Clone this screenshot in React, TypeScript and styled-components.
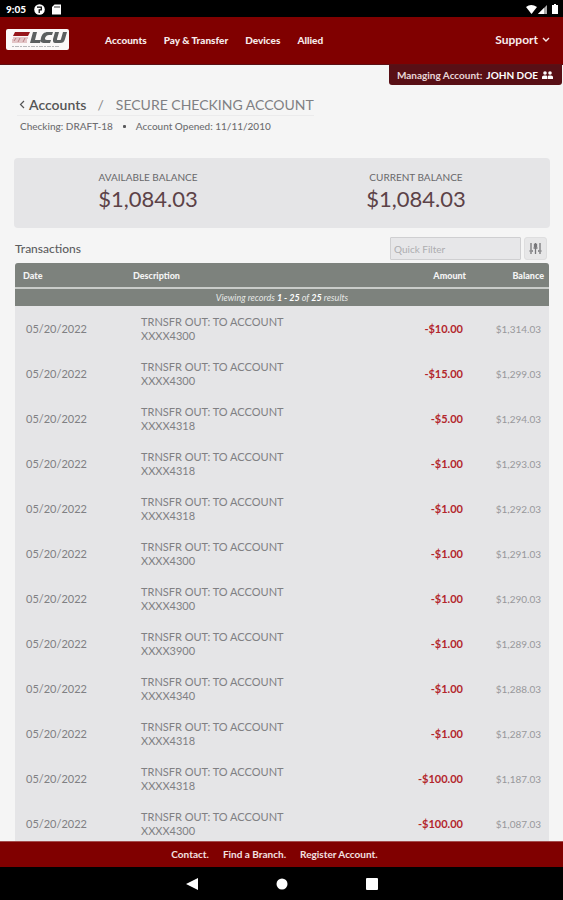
import React from "react";
import styled, { createGlobalStyle } from "styled-components";

const GlobalStyle = createGlobalStyle`
  * { box-sizing: border-box; }
  body { margin: 0; background: #f5f5f5; font-family: Lato, "Liberation Sans", sans-serif; }
  a { color: inherit; text-decoration: none; }
  button { font: inherit; cursor: pointer; }
`;

const Shell = styled.div`
  display: flex;
  flex-direction: column;
  height: 100vh;
  overflow: hidden;
`;

const StatusBar = styled.div`
  flex: none;
  display: flex;
  align-items: center;
  gap: 8px;
  height: 17px;
  padding: 1px 4px 0 6px;
  background: #000;
  color: #fff;
  font-size: 10px;
  font-weight: 900;
`;

const StatusSignals = styled.div`
  display: flex;
  align-items: center;
  gap: 2px;
  margin-left: auto;
`;

const Header = styled.header`
  flex: none;
  display: flex;
  align-items: center;
  height: 48px;
  padding: 0 13px 2px 6px;
  background: #800000;
  border-bottom: 1px solid #5c1014;
  color: #f7eaea;
`;

const LogoLink = styled.a`
  display: block;
  height: 21px;
`;

const MainNav = styled.nav`
  display: flex;
  gap: 17px;
  margin-left: 36px;
  font-size: 10px;
  font-weight: 900;
`;

const SupportButton = styled.button`
  display: flex;
  align-items: center;
  gap: 4px;
  margin-left: auto;
  padding: 0;
  border: 0;
  background: none;
  color: inherit;
  font-size: 12px;
  font-weight: 700;
`;

const Content = styled.main`
  flex: 1;
  min-height: 0;
  overflow: auto;
  scrollbar-width: none;
  color: #5d5d5f;
`;

const ManagingTab = styled.button`
  display: flex;
  align-items: center;
  gap: 4px;
  height: 20px;
  margin: 0 1px 0 auto;
  padding: 0 9px 0 8px;
  border: 0;
  border-radius: 0 0 3px 3px;
  background: #580f15;
  color: #e8d6d8;
  font-size: 10px;
  font-weight: 700;
  strong { color: #fff; font-weight: 700; }
`;

const TitleBlock = styled.div`
  padding: 10px 17px 0;
`;

const Breadcrumb = styled.div`
  display: flex;
  align-items: center;
  width: fit-content;
  height: 21px;
  padding: 0 0 1px 2px;
  border-bottom: 1px solid #ebebec;
  font-size: 14px;
  a { display: flex; align-items: center; gap: 4px; font-weight: 600; color: #555; }
`;

const Slash = styled.span`
  margin: 0 12px 0 11px;
  color: #888;
`;

const PageTitle = styled.h1`
  margin: 0;
  font-size: 14px;
  font-weight: 400;
  color: #808083;
`;

const AccountMeta = styled.div`
  display: flex;
  align-items: center;
  gap: 10px;
  height: 20px;
  padding-left: 3px;
  font-size: 10px;
  font-weight: 500;
  color: #6d6d70;
`;

const Dot = styled.span`
  width: 3px;
  height: 3px;
  border-radius: 1px;
  background: #5a5a5c;
`;

const Balances = styled.section`
  display: grid;
  grid-template-columns: 1fr 1fr;
  height: 70px;
  margin: 22px 13px 0 14px;
  padding-top: 12px;
  border-radius: 4px;
  background: #e5e5e7;
  text-align: center;
`;

const BalanceLabel = styled.div`
  font-size: 10px;
  line-height: 14px;
  color: #68686a;
`;

const BalanceValue = styled.div`
  font-size: 22px;
  line-height: 30px;
  color: #5c4247;
`;

const Toolbar = styled.div`
  display: flex;
  align-items: center;
  gap: 3px;
  margin: 9px 16px 3px 15px;
`;

const SectionTitle = styled.h2`
  flex: 1;
  margin: 0;
  font-size: 12px;
  font-weight: 500;
`;

const FilterInput = styled.input`
  width: 131px;
  height: 23px;
  padding: 0 3px;
  border: 1px solid #cfcfd1;
  border-radius: 1px;
  background: #e7e7e9;
  font: 10px Lato, sans-serif;
  &::placeholder { color: #adadb0; opacity: 1; }
`;

const FilterButton = styled.button`
  display: grid;
  place-items: center;
  width: 23px;
  height: 23px;
  padding: 0;
  border: 1px solid #dededf;
  border-radius: 3px;
  background: #e7e7e8;
`;

const TableFrame = styled.div`
  margin: 0 14px 0 15px;
  border-radius: 3px 3px 0 0;
  overflow: hidden;
`;

const Table = styled.table`
  width: 100%;
  border-collapse: collapse;
  table-layout: fixed;
  background: #e5e5e7;
`;

const Column = styled.col<{ $width?: number }>`
  width: ${(p) => (p.$width ? p.$width + "px" : "auto")};
`;

const HeadCell = styled.th<{ $end?: boolean }>`
  height: 25px;
  padding: 0 5px 0 8px;
  background: #7d827d;
  color: #f4f4f4;
  font-size: 9px;
  font-weight: 900;
  text-align: ${(p) => (p.$end ? "right" : "left")};
`;

const RecordsCell = styled.td`
  height: 18px;
  padding: 0;
  border-top: 2px solid #c9ccc9;
  background: #7d827d;
  color: #e6e8e6;
  font-size: 9px;
  line-height: 16px;
  font-style: italic;
  text-align: center;
  strong { color: #fff; font-weight: 700; }
`;

const DateCell = styled.td`
  height: 45px;
  padding: 0 0 0 11px;
  font-size: 11px;
  color: #808083;
`;

const DescriptionCell = styled.td`
  padding: 0 80px 0 16px;
  font-size: 11px;
  line-height: 14px;
  color: #808083;
`;

const AmountCell = styled.td`
  padding: 0 8px 0 0;
  font-size: 11px;
  font-weight: 700;
  color: #b3262c;
  text-align: right;
`;

const BalanceCell = styled.td`
  padding: 0 8px 0 0;
  font-size: 10px;
  color: #98989b;
  text-align: right;
`;

const Footer = styled.footer`
  flex: none;
  display: flex;
  align-items: center;
  justify-content: center;
  gap: 14px;
  height: 26px;
  padding: 0 14px 2px 0;
  border-top: 1px solid #a34c4c;
  background: #800000;
  color: #f3e1e1;
  font-size: 10px;
  font-weight: 700;
`;

const SystemNav = styled.nav`
  flex: none;
  display: flex;
  align-items: center;
  justify-content: center;
  gap: 78px;
  height: 33px;
  background: #000;
`;

const SystemButton = styled.button`
  display: flex;
  padding: 0;
  border: 0;
  background: none;
`;

const rows = [
  ["4300", "10.00", "1,314.03"],
  ["4300", "15.00", "1,299.03"],
  ["4318", "5.00", "1,294.03"],
  ["4318", "1.00", "1,293.03"],
  ["4318", "1.00", "1,292.03"],
  ["4300", "1.00", "1,291.03"],
  ["4300", "1.00", "1,290.03"],
  ["3900", "1.00", "1,289.03"],
  ["4340", "1.00", "1,288.03"],
  ["4318", "1.00", "1,287.03"],
  ["4318", "100.00", "1,187.03"],
  ["4300", "100.00", "1,087.03"],
];

function Logo() {
  return (
    <svg width="63" height="21" viewBox="0 0 63 21" role="img" aria-label="LCU">
      <rect width="63" height="21" rx="2" fill="#fbf8f8" />
      <path d="M9 3h15l-2 4H7z" fill="#97161b" />
      <path d="M7 9h15M6 11h15M6 13h15" stroke="#dcb4b6" strokeWidth="1.500" />
      <path d="M8 12l2-3M12 13l2-4M17 13l2-4" stroke="#b98083" strokeWidth="1" />
      <path d="M27 3h4l-2 8h6l-1 3H24z" fill="#5c5f60" />
      <path d="M47 3h-5c-4 0-6 2-7 6-1 4 0 5 4 5h5l1-3h-4c-2 0-2-1-2-2 1-2 2-3 4-3h3z" fill="#5c5f60" />
      <path d="M49 3h4l-2 7c0 1 0 1 1 1h1c1 0 2 0 2-1l2-7h4l-2 7c-1 3-2 4-5 4h-4c-3 0-3-1-3-4z" fill="#5c5f60" />
      <path d="M6 17.500h48" stroke="#b5b5b8" strokeWidth="1" strokeDasharray="2 1 4 1" />
    </svg>
  );
}

function NotificationIcons() {
  return (
    <svg width="28" height="11" viewBox="0 0 28 11" aria-hidden="true">
      <circle cx="5.500" cy="5.500" r="5.300" fill="#fff" />
      <path d="M3 3.200h4.300v2.600H5.200V9" fill="none" stroke="#000" strokeWidth="1.200" />
      <path d="M20.500 0.500H27v10h-9V3z" fill="#fff" />
      <path d="M21 2v2M23 2v2M25 2v2" stroke="#000" strokeWidth=".8" />
    </svg>
  );
}

function SignalIcons() {
  return (
    <svg width="33" height="11" viewBox="0 0 33 11" aria-hidden="true">
      <path d="M0 3q5-4 11 0L5.500 10z" fill="#fff" />
      <path d="M21 1v9h-9z" fill="#aaa" />
      <path d="M18 4v6h-6z" fill="#fff" />
      <path d="M26 1h2V0h2v1h2v9h-6z" fill="#fff" />
    </svg>
  );
}

export default function App() {
  return (
    <Shell>
      <GlobalStyle />
      <StatusBar>
        <span>9:05</span>
        <NotificationIcons />
        <StatusSignals><SignalIcons /></StatusSignals>
      </StatusBar>
      <Header>
        <LogoLink href="#"><Logo /></LogoLink>
        <MainNav>
          <a href="#">Accounts</a>
          <a href="#">Pay &amp; Transfer</a>
          <a href="#">Devices</a>
          <a href="#">Allied</a>
        </MainNav>
        <SupportButton>
          Support
          <svg width="8" height="6" viewBox="0 0 8 6" fill="none" stroke="currentColor" strokeWidth="1.400"><path d="M1 1l3 3 3-3" /></svg>
        </SupportButton>
      </Header>
      <Content>
        <ManagingTab>
          <span>Managing Account:</span>
          <strong>JOHN DOE</strong>
          <svg width="11" height="9" viewBox="0 0 11 9" fill="#fff" aria-hidden="true">
            <circle cx="3" cy="2" r="1.800" /><circle cx="8" cy="2" r="1.800" />
            <path d="M0 8V6q0-1.500 2-1.500h2q1 0 1.200 1V8zM5.800 8V5.500q.2-1 1.200-1h2q2 0 2 1.500v2z" />
          </svg>
        </ManagingTab>
        <TitleBlock>
          <Breadcrumb>
            <a href="#">
              <svg width="6" height="9" viewBox="0 0 6 9" fill="none" stroke="currentColor" strokeWidth="1.200"><path d="M5 1L1.500 4.500 5 8" /></svg>
              Accounts
            </a>
            <Slash>/</Slash>
            <PageTitle>SECURE CHECKING ACCOUNT</PageTitle>
          </Breadcrumb>
          <AccountMeta>
            <span>Checking: DRAFT-18</span>
            <Dot />
            <span>Account Opened: 11/11/2010</span>
          </AccountMeta>
        </TitleBlock>
        <Balances>
          <div>
            <BalanceLabel>AVAILABLE BALANCE</BalanceLabel>
            <BalanceValue>$1,084.03</BalanceValue>
          </div>
          <div>
            <BalanceLabel>CURRENT BALANCE</BalanceLabel>
            <BalanceValue>$1,084.03</BalanceValue>
          </div>
        </Balances>
        <Toolbar>
          <SectionTitle>Transactions</SectionTitle>
          <FilterInput type="text" placeholder="Quick Filter" aria-label="Quick Filter" />
          <FilterButton aria-label="Filter options">
            <svg width="13" height="13" viewBox="0 0 13 13" fill="none" stroke="#77777a" strokeWidth="1.300">
              <path d="M2 1v7M2 10v2M6.500 1v1M6.500 5v7M11 1v7M11 10v2M0.500 9h3.500M4.500 6h4M9 9h3.500" />
              <path d="M5.500 2.500h2v2h-2z" fill="#77777a" />
            </svg>
          </FilterButton>
        </Toolbar>
        <TableFrame>
          <Table>
            <colgroup>
              <Column $width={110} />
              <Column />
              <Column $width={90} />
              <Column $width={78} />
            </colgroup>
            <thead>
              <tr>
                <HeadCell scope="col">Date</HeadCell>
                <HeadCell scope="col">Description</HeadCell>
                <HeadCell scope="col" $end>Amount</HeadCell>
                <HeadCell scope="col" $end>Balance</HeadCell>
              </tr>
              <tr>
                <RecordsCell colSpan={4}>
                  Viewing records <strong>1 - 25</strong> of <strong>25</strong> results
                </RecordsCell>
              </tr>
            </thead>
            <tbody>
              {rows.map(([account, amount, balance]) => (
                <tr key={balance}>
                  <DateCell>05/20/2022</DateCell>
                  <DescriptionCell>{`TRNSFR OUT: TO ACCOUNT XXXX${account}`}</DescriptionCell>
                  <AmountCell>{`-$${amount}`}</AmountCell>
                  <BalanceCell>{`$${balance}`}</BalanceCell>
                </tr>
              ))}
            </tbody>
          </Table>
        </TableFrame>
      </Content>
      <Footer>
        <a href="#">Contact.</a>
        <a href="#">Find a Branch.</a>
        <a href="#">Register Account.</a>
      </Footer>
      <SystemNav>
        <SystemButton aria-label="Back">
          <svg width="12" height="12" viewBox="0 0 12 12"><path d="M12 0v12L0 6z" fill="#fff" /></svg>
        </SystemButton>
        <SystemButton aria-label="Home">
          <svg width="12" height="12" viewBox="0 0 12 12"><circle cx="6" cy="6" r="5.500" fill="#fff" /></svg>
        </SystemButton>
        <SystemButton aria-label="Recent apps">
          <svg width="12" height="12" viewBox="0 0 12 12"><rect width="12" height="12" rx="1" fill="#fff" /></svg>
        </SystemButton>
      </SystemNav>
    </Shell>
  );
}
